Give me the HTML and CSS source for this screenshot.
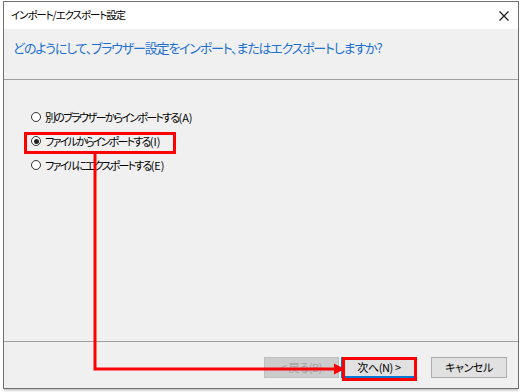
FILE: index.html
```html
<!DOCTYPE html>
<html lang="ja">
<head>
<meta charset="utf-8">
<link rel="stylesheet" href="styles.css">
</head>
<body>
<div class="window">
  <div class="titlebar">
    <span class="title">インポート/エクスポート設定</span>
    <svg class="close" width="10" height="10" viewBox="0 0 10 10"><path d="M0.5 0.5 L9.5 9.5 M9.5 0.5 L0.5 9.5" stroke="#111" stroke-width="1.1" fill="none"/></svg>
  </div>
  <div class="header">
    <span class="instruction">どのようにして、ブラウザー設定をインポート、またはエクスポートしますか?</span>
  </div>
  <div class="content">
    <div class="option"><span class="radio"></span><span class="label">別のブラウザーからインポートする<span class="key">(A)</span></span></div>
    <div class="option"><span class="radio checked"></span><span class="label">ファイルからインポートする<span class="key">(I)</span></span></div>
    <div class="option"><span class="radio"></span><span class="label">ファイルにエクスポートする<span class="key">(E)</span></span></div>
  </div>
  <div class="footer">
    <div class="btn disabled">&lt; 戻る(B)</div>
    <div class="btn default">次へ(N) &gt;</div>
    <div class="btn cancel">キャンセル</div>
  </div>
</div>
<div class="shadow"></div>
<svg class="annot" width="521" height="392" viewBox="0 0 521 392">
  <rect x="25.5" y="133.5" width="149" height="19" fill="none" stroke="#ff0000" stroke-width="3"/>
  <polyline points="95,154 95,369 337,369" fill="none" stroke="#ff0000" stroke-width="3"/>
  <polygon points="334,363.5 345,369 334,374.5" fill="#ff0000"/>
  <rect x="343.5" y="358.5" width="72" height="21" fill="none" stroke="#ff0000" stroke-width="3"/>
</svg>
</body>
</html>
```
FILE: styles.css
```css
html, body {
  margin: 0;
  padding: 0;
  background: #ffffff;
  width: 521px;
  height: 392px;
  overflow: hidden;
}
body {
  font-family: "Noto Sans CJK JP", "Noto Sans", sans-serif;
  font-feature-settings: "palt";
  position: relative;
  color: #000;
}
.window {
  box-sizing: border-box;
  width: 516px;
  height: 388px;
  margin: 1px 0 0 3px;
  border: 1px solid #6f6f6f;
  background: #f0f0f0;
  display: flex;
  flex-direction: column;
}
.titlebar {
  height: 27px;
  background: #ffffff;
  display: flex;
  align-items: center;
  justify-content: space-between;
  padding: 0 9px 0 7px;
  flex-shrink: 0;
}
.title {
  font-size: 10.5px;
  letter-spacing: -1.1px;
  line-height: 1;
}
.close { display: block; }
.header {
  height: 51px;
  box-sizing: border-box;
  border-bottom: 1px solid #a0a0a0;
  padding: 5px 0 0 9px;
  flex-shrink: 0;
}
.instruction {
  font-size: 13px;
  color: #1d6fd0;
  letter-spacing: -1.2px;
  line-height: 18px;
}
.content {
  flex: 1;
  padding: 25px 0 0 27px;
  display: flex;
  flex-direction: column;
}
.option {
  height: 24px;
  display: flex;
  align-items: center;
  font-size: 11px;
  letter-spacing: -1.75px;
}
.key {
  letter-spacing: 0;
}
.radio {
  box-sizing: border-box;
  width: 10px;
  height: 10px;
  border: 1px solid #333;
  border-radius: 50%;
  background: #fff;
  margin-right: 4px;
  display: flex;
  align-items: center;
  justify-content: center;
}
.radio.checked::after {
  content: "";
  width: 5px;
  height: 5px;
  border-radius: 50%;
  background: #222;
}
.footer {
  height: 47px;
  box-sizing: border-box;
  border-top: 1px solid #a0a0a0;
  flex-shrink: 0;
  display: flex;
  padding: 15px 0 0 260px;
}
.btn {
  box-sizing: border-box;
  width: 75px;
  height: 21px;
  border: 1px solid #adadad;
  background: #e1e1e1;
  font-size: 11px;
  letter-spacing: -0.4px;
  display: flex;
  align-items: center;
  justify-content: center;
  line-height: 1;
}
.btn.disabled {
  background: #cccccc;
  border-color: #bfbfbf;
  color: #a3a3a3;
}
.btn.default {
  margin-left: 2px;
  border: 1px solid #0078d7;
  box-shadow: inset 0 0 0 1px #0078d7;
  width: 76px;
}
.btn.cancel {
  margin-left: 14px;
  width: 76px;
}
.shadow {
  position: absolute;
  left: 4px;
  top: 389px;
  width: 514px;
  height: 3px;
  background: linear-gradient(#9a9a9a, #ffffff);
  opacity: 0.6;
}
.annot {
  position: absolute;
  left: 0;
  top: 0;
  pointer-events: none;
}
```
